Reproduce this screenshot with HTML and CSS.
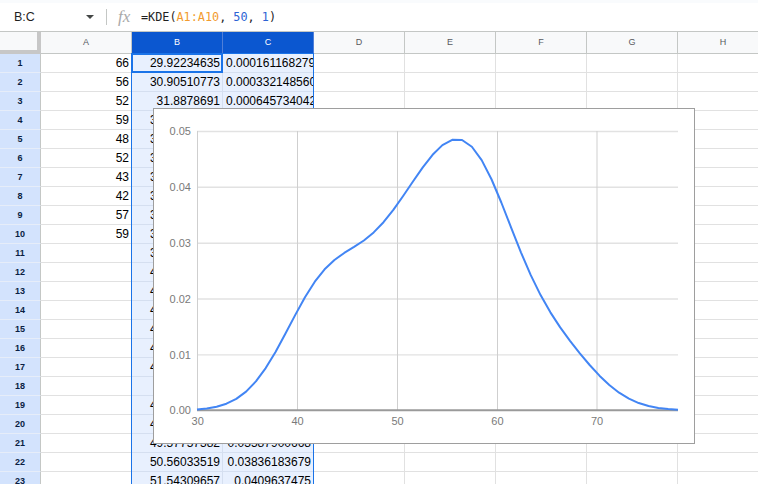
FILE: index.html
```html
<!DOCTYPE html>
<html lang="en">
<head>
<meta charset="utf-8">
<title>KDE sheet</title>
<link rel="stylesheet" href="styles.css">
</head>
<body>
<div class="app">
  <div class="topband"></div>
  <div class="fbar">
    <div class="namebox"><span class="label">B:C</span><span class="caret"></span></div>
    <div class="vsep"></div>
    <span class="fx">fx</span>
    <div class="formula">=KDE(<span class="ref">A1:A10</span>, <span class="lit">50</span>, <span class="lit">1</span>)</div>
  </div>
  <div class="sheet">
    <div class="corner"></div><div class="ch">A</div><div class="ch on">B</div><div class="ch on">C</div><div class="ch">D</div><div class="ch">E</div><div class="ch">F</div><div class="ch">G</div><div class="ch">H</div>

    <div class="rh">1</div><div class="c num">66</div><div class="c sel num">29.92234635</div><div class="c sel clip">0.000161168279</div><div class="c"></div><div class="c"></div><div class="c"></div><div class="c"></div><div class="c"></div>
    <div class="rh">2</div><div class="c num">56</div><div class="c sel num">30.90510773</div><div class="c sel clip">0.000332148560</div><div class="c"></div><div class="c"></div><div class="c"></div><div class="c"></div><div class="c"></div>
    <div class="rh">3</div><div class="c num">52</div><div class="c sel num">31.8878691</div><div class="c sel clip">0.000645734042</div><div class="c"></div><div class="c"></div><div class="c"></div><div class="c"></div><div class="c"></div>
    <div class="rh">4</div><div class="c num">59</div><div class="c sel num">32.87063047</div><div class="c sel num" data-k="3"></div><div class="c"></div><div class="c"></div><div class="c"></div><div class="c"></div><div class="c"></div>
    <div class="rh">5</div><div class="c num">48</div><div class="c sel num">33.85339184</div><div class="c sel num" data-k="4"></div><div class="c"></div><div class="c"></div><div class="c"></div><div class="c"></div><div class="c"></div>
    <div class="rh">6</div><div class="c num">52</div><div class="c sel num">34.83615322</div><div class="c sel num" data-k="5"></div><div class="c"></div><div class="c"></div><div class="c"></div><div class="c"></div><div class="c"></div>
    <div class="rh">7</div><div class="c num">43</div><div class="c sel num">35.81891459</div><div class="c sel num" data-k="6"></div><div class="c"></div><div class="c"></div><div class="c"></div><div class="c"></div><div class="c"></div>
    <div class="rh">8</div><div class="c num">42</div><div class="c sel num">36.80167596</div><div class="c sel num" data-k="7"></div><div class="c"></div><div class="c"></div><div class="c"></div><div class="c"></div><div class="c"></div>
    <div class="rh">9</div><div class="c num">57</div><div class="c sel num">37.78443733</div><div class="c sel num" data-k="8"></div><div class="c"></div><div class="c"></div><div class="c"></div><div class="c"></div><div class="c"></div>
    <div class="rh">10</div><div class="c num">59</div><div class="c sel num">38.76719871</div><div class="c sel num" data-k="9"></div><div class="c"></div><div class="c"></div><div class="c"></div><div class="c"></div><div class="c"></div>
    <div class="rh">11</div><div class="c num"></div><div class="c sel num">39.74996008</div><div class="c sel num" data-k="10"></div><div class="c"></div><div class="c"></div><div class="c"></div><div class="c"></div><div class="c"></div>
    <div class="rh">12</div><div class="c num"></div><div class="c sel num">40.73272145</div><div class="c sel num" data-k="11"></div><div class="c"></div><div class="c"></div><div class="c"></div><div class="c"></div><div class="c"></div>
    <div class="rh">13</div><div class="c num"></div><div class="c sel num">41.71548282</div><div class="c sel num" data-k="12"></div><div class="c"></div><div class="c"></div><div class="c"></div><div class="c"></div><div class="c"></div>
    <div class="rh">14</div><div class="c num"></div><div class="c sel num">42.69824419</div><div class="c sel num" data-k="13"></div><div class="c"></div><div class="c"></div><div class="c"></div><div class="c"></div><div class="c"></div>
    <div class="rh">15</div><div class="c num"></div><div class="c sel num">43.68100557</div><div class="c sel num" data-k="14"></div><div class="c"></div><div class="c"></div><div class="c"></div><div class="c"></div><div class="c"></div>
    <div class="rh">16</div><div class="c num"></div><div class="c sel num">44.66376694</div><div class="c sel num" data-k="15"></div><div class="c"></div><div class="c"></div><div class="c"></div><div class="c"></div><div class="c"></div>
    <div class="rh">17</div><div class="c num"></div><div class="c sel num">45.64652831</div><div class="c sel num" data-k="16"></div><div class="c"></div><div class="c"></div><div class="c"></div><div class="c"></div><div class="c"></div>
    <div class="rh">18</div><div class="c num"></div><div class="c sel num">46.6292897</div><div class="c sel num" data-k="17"></div><div class="c"></div><div class="c"></div><div class="c"></div><div class="c"></div><div class="c"></div>
    <div class="rh">19</div><div class="c num"></div><div class="c sel num">47.61205106</div><div class="c sel num" data-k="18"></div><div class="c"></div><div class="c"></div><div class="c"></div><div class="c"></div><div class="c"></div>
    <div class="rh">20</div><div class="c num"></div><div class="c sel num">48.59481243</div><div class="c sel num" data-k="19"></div><div class="c"></div><div class="c"></div><div class="c"></div><div class="c"></div><div class="c"></div>
    <div class="rh">21</div><div class="c num"></div><div class="c sel num">49.57757382</div><div class="c sel num" data-k="20"></div><div class="c"></div><div class="c"></div><div class="c"></div><div class="c"></div><div class="c"></div>
    <div class="rh">22</div><div class="c num"></div><div class="c sel num">50.56033519</div><div class="c sel num">0.03836183679</div><div class="c"></div><div class="c"></div><div class="c"></div><div class="c"></div><div class="c"></div>
    <div class="rh">23</div><div class="c num"></div><div class="c sel num">51.54309657</div><div class="c sel num">0.0409637475</div><div class="c"></div><div class="c"></div><div class="c"></div><div class="c"></div><div class="c"></div>

    <div class="selection"></div>
    <div class="active"></div>

    <div class="chart">
      <svg class="plot" width="540" height="334" viewBox="0 0 540 334">
        <g class="hgrid">
          <line x1="43" y1="22.5" x2="524" y2="22.5"/>
          <line x1="43" y1="78.3" x2="524" y2="78.3"/>
          <line x1="43" y1="134.2" x2="524" y2="134.2"/>
          <line x1="43" y1="190" x2="524" y2="190"/>
          <line x1="43" y1="245.9" x2="524" y2="245.9"/>
        </g>
        <g class="vgrid">
          <line x1="43.5" y1="22" x2="43.5" y2="301"/>
          <line x1="143.5" y1="22" x2="143.5" y2="301"/>
          <line x1="243.5" y1="22" x2="243.5" y2="301"/>
          <line x1="343.5" y1="22" x2="343.5" y2="301"/>
          <line x1="443" y1="22" x2="443" y2="301"/>
        </g>
        <line class="base" x1="43" y1="301.3" x2="524" y2="301.3"/>
        <polyline id="curve" class="curve" points=""/>
        <g class="ylab">
          <text x="37" y="26">0.05</text>
          <text x="37" y="82">0.04</text>
          <text x="37" y="138">0.03</text>
          <text x="37" y="194">0.02</text>
          <text x="37" y="250">0.01</text>
          <text x="37" y="305">0.00</text>
        </g>
        <g class="xlab">
          <text x="43.7" y="316">30</text>
          <text x="143.6" y="316">40</text>
          <text x="243.5" y="316">50</text>
          <text x="343.4" y="316">60</text>
          <text x="443" y="316">70</text>
        </g>
      </svg>
    </div>
  </div>
</div>
<script src="script.js"></script>
</body>
</html>
```

FILE: styles.css
```css
* { box-sizing: border-box; margin: 0; padding: 0; }
html, body { width: 758px; height: 484px; overflow: hidden; background: #fff; }
body { font-family: "Liberation Sans", Arial, sans-serif; color: #000; }

.app { width: 758px; height: 484px; overflow: hidden; }

.topband { height: 3px; background: #f9fbfd; }

.fbar {
  height: 29px;
  border-bottom: 1px solid #c4c7c5;
  display: flex;
  align-items: center;
  background: #fff;
}
.namebox {
  width: 106px;
  display: flex;
  align-items: center;
  padding-left: 14px;
  font-size: 12.5px;
  color: #1f1f1f;
}
.namebox .label { flex: 1; }
.caret {
  width: 0; height: 0;
  border-left: 4px solid transparent;
  border-right: 4px solid transparent;
  border-top: 4px solid #444746;
  margin-right: 12px;
}
.vsep { width: 1px; height: 16px; background: #c4c7c5; }
.fx {
  margin-left: 11px;
  width: 16px;
  font-family: "Liberation Serif", serif;
  font-style: italic;
  font-size: 17px;
  color: #a9a9a9;
  line-height: 20px;
}
.formula {
  margin-left: 7px;
  font-family: "DejaVu Sans Mono", monospace;
  font-size: 11.8px;
  color: #1f1f1f;
  white-space: nowrap;
}
.formula .ref { color: #f29b2e; }
.formula .lit { color: #2c63d4; }

.sheet {
  position: relative;
  display: grid;
  grid-template-columns: 41px repeat(8, 91px);
  grid-template-rows: 22px;
  grid-auto-rows: 19px;
}

.corner {
  background: #f8f9fa;
  border-right: 4px solid #c7c7c7;
  border-bottom: 4px solid #c7c7c7;
}
.ch {
  background: #f8f9fa;
  border-right: 1px solid #c4c7c5;
  border-bottom: 1px solid #c4c7c5;
  font-size: 9px;
  line-height: 21px;
  text-align: center;
  color: #575a5e;
}
.ch.on {
  background: #0b57d0;
  color: #fff;
  border-right-color: #4f7fd8;
  border-bottom-color: #0b57d0;
}

.rh {
  background: #d3e3fd;
  border-right: 1px solid #c4c7c5;
  border-bottom: 1px solid #e6edf9;
  font-size: 9px;
  font-weight: bold;
  text-align: center;
  line-height: 18px;
  color: #0a1e43;
}

.c {
  border-right: 1px solid #e1e1e1;
  border-bottom: 1px solid #e1e1e1;
  font-size: 12px;
  line-height: 18px;
  padding: 0 2px 0 3px;
  white-space: nowrap;
  overflow: hidden;
}
.num { text-align: right; }
.sel { background: #e8f0fe; border-color: #d5dff0; }
.clip { text-align: left; padding-left: 3px; padding-right: 0; }

.selection {
  position: absolute;
  left: 131px;
  top: 21px;
  width: 183px;
  height: 500px;
  border: 1px solid #1a73e8;
  pointer-events: none;
}
.active {
  position: absolute;
  left: 131px;
  top: 21px;
  width: 92px;
  height: 20px;
  border: 2px solid #1a73e8;
  pointer-events: none;
}

.chart {
  position: absolute;
  left: 153px;
  top: 76px;
  width: 542px;
  height: 336px;
  background: #fff;
  border: 1px solid #9e9e9e;
}
.plot { display: block; }
.hgrid line { stroke: #e2e2e2; stroke-width: 1.4; }
.vgrid line { stroke: #cfcfcf; stroke-width: 1; }
.base { stroke: #9a9a9a; stroke-width: 2; }
.curve { fill: none; stroke: #4285f4; stroke-width: 2; stroke-linejoin: round; }
.ylab text, .xlab text {
  font-family: "Liberation Sans", Arial, sans-serif;
  font-size: 11px;
  fill: #7a7a7a;
}
.ylab text { text-anchor: end; }
.xlab text { text-anchor: middle; }
```

FILE: script.js
```js
(function () {
  var data = [66, 56, 52, 59, 48, 52, 43, 42, 57, 59];
  var n = data.length;
  var mean = data.reduce(function (a, b) { return a + b; }, 0) / n;
  var sd = Math.sqrt(data.reduce(function (a, b) { return a + (b - mean) * (b - mean); }, 0) / (n - 1));
  var s = data.slice().sort(function (a, b) { return a - b; });
  function q(p) {
    var pos = (n - 1) * p, lo = Math.floor(pos), fr = pos - lo;
    return s[lo] + (s[Math.min(lo + 1, n - 1)] - s[lo]) * fr;
  }
  var iqr = q(0.75) - q(0.25);
  var h = 0.9 * Math.min(sd, iqr / 1.34) * Math.pow(n, -0.2);
  var lo = s[0] - 3 * h, hi = s[n - 1] + 3 * h, N = 50;
  function f(x) {
    var sum = 0;
    for (var i = 0; i < n; i++) { var z = (x - data[i]) / h; sum += Math.exp(-0.5 * z * z); }
    return sum / (n * h * Math.sqrt(2 * Math.PI));
  }
  var pts = [], vals = [];
  for (var i = 0; i < N; i++) {
    var x = lo + (hi - lo) * i / (N - 1);
    var y = f(x);
    vals.push(y);
    pts.push((43 + (x - lo) / (hi - lo) * 481).toFixed(2) + "," + (301.3 - y * 5586).toFixed(2));
  }
  document.getElementById("curve").setAttribute("points", pts.join(" "));
  function fmt(v) {
    var t = v.toPrecision(10);
    if (t.indexOf(".") >= 0) t = t.replace(/0+$/, "").replace(/\.$/, "");
    return t;
  }
  var cells = document.querySelectorAll("[data-k]");
  for (var j = 0; j < cells.length; j++) {
    var k = parseInt(cells[j].getAttribute("data-k"), 10);
    if (!cells[j].textContent) cells[j].textContent = fmt(vals[k]);
  }
})();
```
